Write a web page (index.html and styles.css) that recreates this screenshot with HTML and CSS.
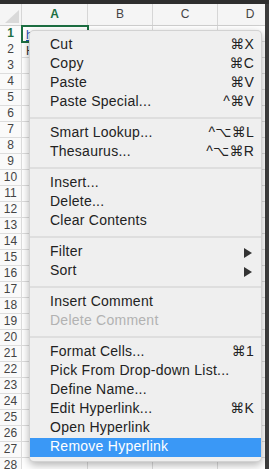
FILE: index.html
```html
<!DOCTYPE html>
<html>
<head>
<meta charset="utf-8">
<link rel="stylesheet" href="styles.css">
</head>
<body>
<div class="topbar"></div>
<div class="main">
  <div class="sheet">
    <div class="row head">
      <span class="corner"><span class="tri"></span></span>
      <span class="col sel">A</span><span class="col">B</span><span class="col">C</span><span class="col">D</span>
    </div>
    <div class="row"><span class="rh sel">1</span><span class="cell link">https://www.example.com/link/page-to-visit</span><span></span><span></span><span></span></div>
    <div class="row"><span class="rh">2</span><span class="cell">Hyperlink</span><span></span><span></span><span></span></div>
    <div class="row"><span class="rh">3</span><span></span><span></span><span></span><span></span></div>
    <div class="row"><span class="rh">4</span><span></span><span></span><span></span><span></span></div>
    <div class="row"><span class="rh">5</span><span></span><span></span><span></span><span></span></div>
    <div class="row"><span class="rh">6</span><span></span><span></span><span></span><span></span></div>
    <div class="row"><span class="rh">7</span><span></span><span></span><span></span><span></span></div>
    <div class="row"><span class="rh">8</span><span></span><span></span><span></span><span></span></div>
    <div class="row"><span class="rh">9</span><span></span><span></span><span></span><span></span></div>
    <div class="row"><span class="rh">10</span><span></span><span></span><span></span><span></span></div>
    <div class="row"><span class="rh">11</span><span></span><span></span><span></span><span></span></div>
    <div class="row"><span class="rh">12</span><span></span><span></span><span></span><span></span></div>
    <div class="row"><span class="rh">13</span><span></span><span></span><span></span><span></span></div>
    <div class="row"><span class="rh">14</span><span></span><span></span><span></span><span></span></div>
    <div class="row"><span class="rh">15</span><span></span><span></span><span></span><span></span></div>
    <div class="row"><span class="rh">16</span><span></span><span></span><span></span><span></span></div>
    <div class="row"><span class="rh">17</span><span></span><span></span><span></span><span></span></div>
    <div class="row"><span class="rh">18</span><span></span><span></span><span></span><span></span></div>
    <div class="row"><span class="rh">19</span><span></span><span></span><span></span><span></span></div>
    <div class="row"><span class="rh">20</span><span></span><span></span><span></span><span></span></div>
    <div class="row"><span class="rh">21</span><span></span><span></span><span></span><span></span></div>
    <div class="row"><span class="rh">22</span><span></span><span></span><span></span><span></span></div>
    <div class="row"><span class="rh">23</span><span></span><span></span><span></span><span></span></div>
    <div class="row"><span class="rh">24</span><span></span><span></span><span></span><span></span></div>
    <div class="row"><span class="rh">25</span><span></span><span></span><span></span><span></span></div>
    <div class="row"><span class="rh">26</span><span></span><span></span><span></span><span></span></div>
    <div class="row"><span class="rh">27</span><span></span><span></span><span></span><span></span></div>
    <div class="row"><span class="rh">28</span><span></span><span></span><span></span><span></span></div>
  </div>
  <div class="edge"></div>
</div>
<div class="selbox"></div>

<div class="menu">
  <div class="item"><span>Cut</span><span class="key">⌘X</span></div>
  <div class="item"><span>Copy</span><span class="key">⌘C</span></div>
  <div class="item"><span>Paste</span><span class="key">⌘V</span></div>
  <div class="item"><span>Paste Special...</span><span class="key">^⌘V</span></div>
  <div class="sep"></div>
  <div class="item"><span>Smart Lookup...</span><span class="key">^⌥⌘L</span></div>
  <div class="item"><span>Thesaurus...</span><span class="key">^⌥⌘R</span></div>
  <div class="sep"></div>
  <div class="item"><span>Insert...</span></div>
  <div class="item"><span>Delete...</span></div>
  <div class="item"><span>Clear Contents</span></div>
  <div class="sep"></div>
  <div class="item"><span>Filter</span><span class="arrow"></span></div>
  <div class="item"><span>Sort</span><span class="arrow"></span></div>
  <div class="sep"></div>
  <div class="item"><span>Insert Comment</span></div>
  <div class="item disabled"><span>Delete Comment</span></div>
  <div class="sep"></div>
  <div class="item"><span>Format Cells...</span><span class="key">⌘1</span></div>
  <div class="item"><span>Pick From Drop-down List...</span></div>
  <div class="item"><span>Define Name...</span></div>
  <div class="item"><span>Edit Hyperlink...</span><span class="key">⌘K</span></div>
  <div class="item"><span>Open Hyperlink</span></div>
  <div class="item active"><span>Remove Hyperlink</span></div>
</div>
</body>
</html>
```

FILE: styles.css
```css
html, body {
  margin: 0;
  padding: 0;
}
body {
  width: 269px;
  height: 469px;
  overflow: hidden;
  position: relative;
  background: #ffffff;
  font-family: "Liberation Sans", "DejaVu Sans", sans-serif;
}
.topbar {
  height: 4px;
  background: #2e2e2e;
}
.main {
  display: flex;
  height: 465px;
}
.sheet {
  flex: 1;
  overflow: hidden;
}
.edge {
  width: 4px;
  background: #3c3c3c;
}
.row {
  display: grid;
  grid-template-columns: 22px 66px 65px 65px 65px;
  height: 16px;
  box-sizing: border-box;
  border-bottom: 1px solid #dddddd;
}
.row > span {
  border-right: 1px solid #dddddd;
  box-sizing: border-box;
  white-space: nowrap;
  font-size: 12px;
  line-height: 15px;
  color: #333;
}
.row.head {
  height: 22px;
  background: #f5f5f5;
  border-bottom: 1px solid #cfcfcf;
}
.row.head > span {
  border-right: 1px solid #d6d6d6;
}
.corner {
  position: relative;
}
.tri {
  position: absolute;
  right: 2px;
  bottom: 2px;
  width: 0;
  height: 0;
  border-left: 14px solid transparent;
  border-bottom: 13px solid #d9d9d9;
}
.col {
  text-align: center;
  font-size: 12px;
  line-height: 21px !important;
  color: #444 !important;
}
.col.sel {
  color: #1d6f42 !important;
  font-weight: bold;
}
.rh {
  text-align: center;
  background: #fafafa;
  font-size: 12px !important;
  color: #444 !important;
}
.rh.sel {
  color: #1d6f42 !important;
  font-weight: bold;
}
.cell {
  padding-left: 4px;
  padding-top: 2px;
  overflow: visible;
  font-size: 12px;
}
.link {
  color: #1f4fb4 !important;
  text-decoration: underline;
}
.selbox {
  position: absolute;
  left: 21px;
  top: 25px;
  width: 68px;
  height: 18px;
  box-sizing: border-box;
  border: 2px solid #1d6f42;
}
.menu {
  position: absolute;
  left: 29px;
  top: 30px;
  width: 233px;
  box-sizing: border-box;
  padding: 5px 0 4px;
  background: #efefef;
  border-radius: 5px;
  border: 1px solid rgba(0, 0, 0, 0.12);
  box-shadow: 0 3px 9px rgba(0, 0, 0, 0.3);
}
.item {
  display: flex;
  justify-content: space-between;
  align-items: center;
  height: 19px;
  padding: 0 7px 0 20px;
  font-size: 14px;
  line-height: 17px;
  letter-spacing: 0.25px;
  color: #222222;
  white-space: nowrap;
}
.item > span:first-child {
  padding-bottom: 2px;
}
.key {
  font-family: "Liberation Sans", "DejaVu Sans", sans-serif;
  padding-bottom: 2px;
}
.disabled {
  color: #b2b2b2;
}
.active {
  background: #3a98f6;
  color: #ffffff;
}
.sep {
  height: 2px;
  margin: 5px 0;
  background: #dedede;
}
.arrow {
  width: 0;
  height: 0;
  margin-right: 2px;
  border-top: 5px solid transparent;
  border-bottom: 5px solid transparent;
  border-left: 8px solid #333333;
}
```
